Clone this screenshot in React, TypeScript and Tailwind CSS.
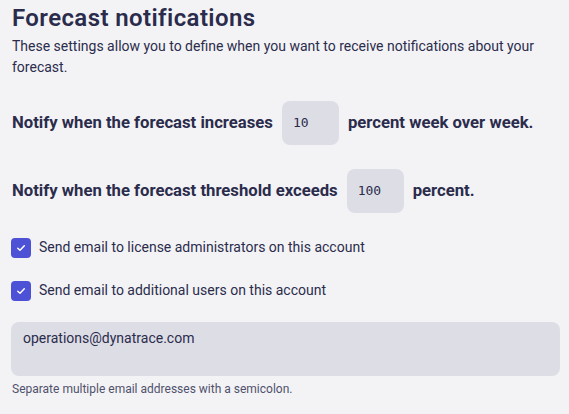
import React from "react";

function Check() {
  return (
    <div className="w-5 h-5 rounded-[4px] bg-[#4d51d6] flex items-center justify-center shrink-0">
      <svg width="12" height="12" viewBox="0 0 12 12" fill="none">
        <path d="M2.8 6.3 L5 8.3 L9.3 3.8" stroke="white" strokeWidth="1.5" strokeLinecap="round" strokeLinejoin="round" />
      </svg>
    </div>
  );
}

export default function App() {
  return (
    <div
      className="w-[569px] h-[414px] bg-[#f3f3f6] text-[#2b2c4c] px-3 overflow-hidden"
      style={{ fontFamily: 'Roboto, "Liberation Sans", sans-serif' }}
    >
      <h1 className="text-[24px] font-semibold leading-[28px] pt-[4px] tracking-[0.4px]">Forecast notifications</h1>
      <p className="text-[14px] leading-[21px] mt-[4px]">
        These settings allow you to define when you want to receive notifications about your forecast.
      </p>
      <div className="flex items-center gap-[9px] mt-[23px] text-[16.7px] font-bold whitespace-nowrap">
        <span>Notify when the forecast increases</span>
        <div className="w-[57px] h-[44px] rounded-[8px] bg-[#dddde6] flex items-center pl-[11px] text-[13px] font-normal" style={{ fontFamily: '"DejaVu Sans Mono", monospace' }}>10</div>
        <span>percent week over week.</span>
      </div>
      <div className="flex items-center gap-[9px] mt-[24px] text-[16.7px] font-bold whitespace-nowrap">
        <span>Notify when the forecast threshold exceeds</span>
        <div className="w-[57px] h-[44px] rounded-[8px] bg-[#dddde6] flex items-center pl-[11px] text-[13px] font-normal" style={{ fontFamily: '"DejaVu Sans Mono", monospace' }}>100</div>
        <span>percent.</span>
      </div>
      <div className="flex items-center gap-2 mt-[24px] text-[14px] -ml-[1px]">
        <Check />
        <span>Send email to license administrators on this account</span>
      </div>
      <div className="flex items-center gap-2 mt-[22px] text-[14px] -ml-[1px]">
        <Check />
        <span>Send email to additional users on this account</span>
      </div>
      <div className="mt-[21px] -ml-[1px] w-[549px] h-[54px] rounded-[8px] bg-[#dddde6] px-3 pt-[6px] leading-[20px] text-[14px]">
        operations@dynatrace.com
      </div>
      <p className="text-[12px] text-[#50516b] mt-[5px] leading-[16px]">Separate multiple email addresses with a semicolon.</p>
    </div>
  );
}
